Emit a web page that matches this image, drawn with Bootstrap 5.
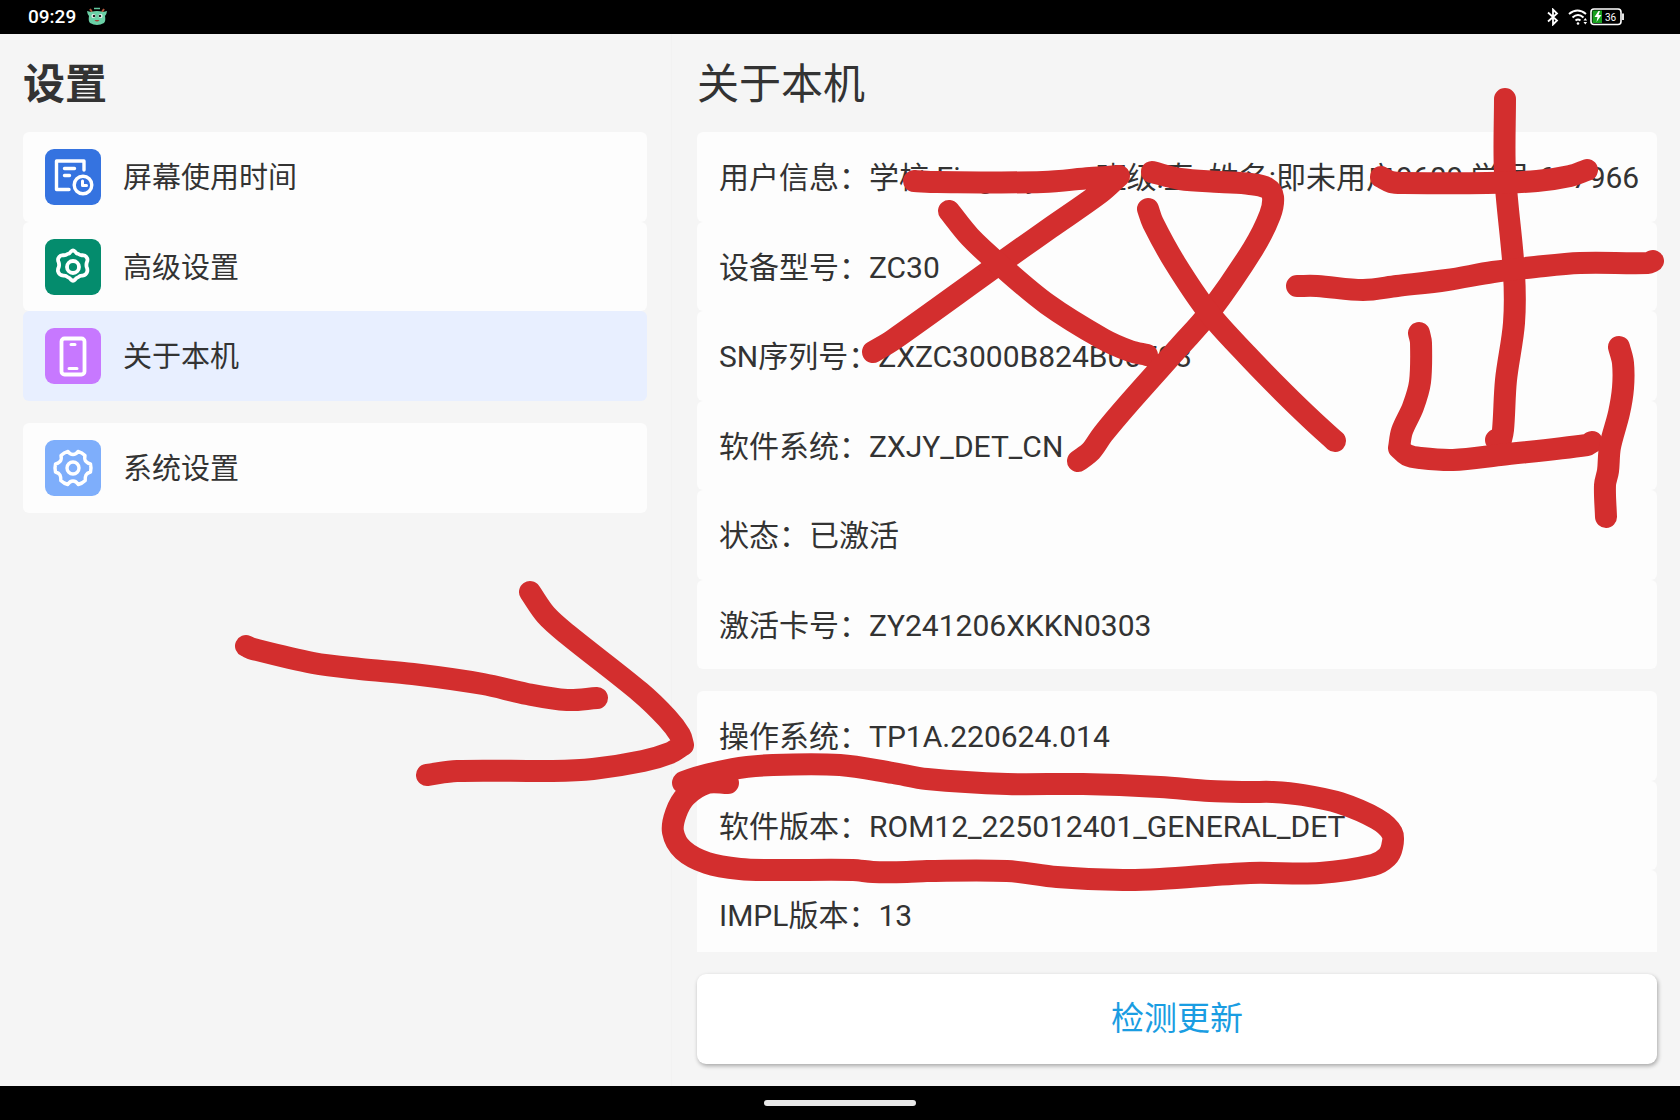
<!DOCTYPE html>
<html lang="zh-CN">
<head>
<meta charset="utf-8">
<meta name="viewport" content="width=device-width, initial-scale=1">
<title>关于本机</title>
<link href="https://cdn.jsdelivr.net/npm/bootstrap@5.3.0/dist/css/bootstrap.min.css" rel="stylesheet">
<style>
  body { font-family: Roboto, "Noto Sans CJK SC", sans-serif; color: #333; background: #f5f5f5; }
  .screen { height: 100vh; }
  .status-bar { height: 34px; background: #000; color: #fff; padding: 0 56px 0 28px; gap: 10px; font-size: 19px; font-weight: 500; }
  .nav-bar-bottom { height: 34px; background: #000; }
  .home-handle { width: 152px; height: 6px; border-radius: 3px; background: #e8e8e8; border: 0; padding: 0; }
  .side-pane { width: 40%; padding: 0 24px 0 23px; border-right: 1px solid #f2f2f2; }
  .detail-pane { min-width: 0; padding: 0 23px 22px 25px; }
  .pane-title { height: 98px; font-size: 42px; line-height: 62px; margin: 0; padding-top: 4px; flex-shrink: 0; }
  .side-pane .pane-title { font-weight: 700; }
  .detail-pane .pane-title { font-weight: 400; }
  .rows { --bs-list-group-border-width: 0; --bs-list-group-bg: #fdfdfd; --bs-list-group-color: #333; --bs-list-group-action-color: #333;
    --bs-list-group-active-bg: #e8efff; --bs-list-group-active-color: #333; --bs-list-group-item-padding-x: 22px; --bs-list-group-item-padding-y: 0; margin: 0 0 22px; }
  .rows .list-group-item { height: 90px; font-size: 29px; line-height: 44px; border-radius: 6px; display: flex; align-items: center; gap: 22px; white-space: nowrap; }
  .rows .list-group-item:nth-child(even) { height: 89px; }
  .rows .list-group-item span { padding-top: 2px; }
  .scroller .rows .list-group-item { font-size: 30px; }
  .scroller { min-height: 0; overflow: hidden; margin-bottom: 22px; }
  .tile { width: 56px; height: 56px; flex: none; }
  .update-btn { height: 90px; flex-shrink: 0; border-radius: 9px; background: #fff; color: #1a9de2; font-size: 33px; line-height: 48px; border: 0; box-shadow: 1px 2px 4px rgba(0,0,0,.32); }
  .update-btn:hover { background: #fff; color: #1a9de2; }
  .ink { position: absolute; left: 0; top: 0; width: 100%; height: 100%; pointer-events: none; fill: none; stroke: #d32e2e; stroke-width: 22; stroke-linecap: round; stroke-linejoin: round; }
</style>
<script src="https://cdn.jsdelivr.net/npm/bootstrap@5.3.0/dist/js/bootstrap.bundle.min.js"></script>
</head>
<body>
<div class="screen d-flex flex-column position-relative overflow-hidden">
  <header class="status-bar d-flex align-items-center flex-shrink-0">
    <span>09:29</span>
    <svg width="22" height="20" viewBox="0 0 22 20" aria-hidden="true">
      <path d="M4 2l2 3M18 2l-2 3" stroke="#b5573c" stroke-width="2"/>
      <path d="M8 1.500h6" stroke="#62c79d" stroke-width="1.500"/>
      <path d="M1 4l4 1q6-2 12 0l4-1q-.5 4-2 5 1 5-1 7-7 4-14 0-2-2-1-7-1.500-1-2-5z" fill="#6bd0a6"/>
      <circle cx="7.500" cy="9" r="2" fill="#fff"/><circle cx="14.500" cy="9" r="2" fill="#fff"/>
      <circle cx="8" cy="9" r="1.300" fill="#222"/><circle cx="14" cy="9" r="1.300" fill="#222"/>
      <path d="M8.500 13q2.500 3 5 0z" fill="#a8433a"/>
    </svg>
    <div class="ms-auto d-flex align-items-center">
      <svg class="me-2" width="14" height="18" viewBox="0 0 14 18" fill="none" stroke="#fff" stroke-width="1.800" aria-label="蓝牙"><path d="M2 4.500l9 8-4 4v-15l4 4-9 8"/></svg>
      <svg width="22" height="18" viewBox="0 0 20 18" fill="none" stroke="#fff" stroke-width="2" aria-label="WLAN"><path d="M0 6q8.500-7 17 0M3.500 9.500q5.500-5 11 0M6.500 12.500q2.500-2 5 0"/><circle cx="9" cy="15.500" r="1.300" fill="#fff" stroke="none"/><path d="M14.500 12.500l1.800-2.500 1.800 2.500zM14.500 14l1.800 2.500 1.800-2.500z" fill="#fff" stroke="none"/></svg>
      <svg width="34" height="18" viewBox="0 0 34 18" aria-label="电量"><rect x="1" y="1" width="30" height="15.500" rx="3" fill="none" stroke="#fff" stroke-width="1.600"/><rect x="2.500" y="2.500" width="9.500" height="12.500" fill="#18a11f"/><path d="M8.500 3l-4 6h3l-1 5 5-7h-3l1.500-4z" fill="#fff"/><path d="M33 5.500v6.500" stroke="#fff" stroke-width="1.800"/><text x="15" y="12.500" font-size="10" font-weight="400" fill="#fff">36</text></svg>
    </div>
  </header>

  <main class="d-flex flex-grow-1" style="min-height:0">
    <nav class="side-pane flex-shrink-0 d-flex flex-column">
      <h1 class="pane-title d-flex align-items-center">设置</h1>
      <div class="list-group rows">
        <a href="#" class="list-group-item list-group-item-action">
          <svg class="tile" viewBox="0 0 56 56" fill="none" stroke="#fff" stroke-width="3.400" stroke-linecap="round" stroke-linejoin="round"><rect width="56" height="56" rx="9" fill="#3573e0" stroke="none"/><path d="M39 21v-9H11.500v28.500H24"/><path d="M19.500 19.500h10M19.500 26.500h5" stroke-width="3.400"/><circle cx="38" cy="36" r="8.800"/><path d="M37.500 32v4.500h4" stroke-width="3"/></svg>
          <span>屏幕使用时间</span></a>
        <a href="#" class="list-group-item list-group-item-action">
          <svg class="tile" viewBox="0 0 56 56" fill="none" stroke="#fff" stroke-width="3.800" stroke-linejoin="round"><rect width="56" height="56" rx="9" fill="#048c6d" stroke="none"/><path d="M22.500 15q2.500-.5 3.500-2.500 2-2 4 0 1 2 3.500 2.500 1.500 1.500 4 1.200 3.500.2 4.800 3.200.5 2-.5 4-.8 2.500 0 5 .8 1.500.5 4-1 4-4.800 4.300-2.500-.2-4 1.300-2.500.7-3.500 2.700-2 2-4 0-1-2-3.500-2.700-1.500-1.500-4-1.300Q14 36.400 13 32.400q-.3-2.500.7-4 .8-2.500 0-5-1-2-.5-4 1.300-3 4.800-3.200 2.500.3 4.500-1.200z"/><circle cx="28" cy="28" r="6"/></svg>
          <span>高级设置</span></a>
        <a href="#" class="list-group-item list-group-item-action active" aria-current="page">
          <svg class="tile" viewBox="0 0 56 56" fill="none" stroke="#fff" stroke-width="3.800" stroke-linecap="round"><rect width="56" height="56" rx="9" fill="#c778ff" stroke="none"/><rect x="16.500" y="10.500" width="23" height="36" rx="3"/><path d="M26 16.500h4M24 40.500h8" stroke-width="3"/></svg>
          <span>关于本机</span></a>
      </div>
      <div class="list-group rows">
        <a href="#" class="list-group-item list-group-item-action">
          <svg class="tile" viewBox="0 0 56 56" fill="none" stroke="#fff" stroke-width="3.400" stroke-linejoin="round"><rect width="56" height="56" rx="9" fill="#7eaefb" stroke="none"/><path d="M23 11.500q2 3 5 3t5-3q4 1 7 4-1 4 1 6t4.500 2.500q1 4 0 8Q42 33 41 35t-.8 5.500q-3 3-7 4-2-3.500-5.200-3.500t-5.200 3.500q-4-1-7-4Q16 37 15 35t-4.500-3q-1-4 0-8 2.500-.5 4.500-2.500t1-6q3-3 7-4z"/><circle cx="28" cy="28" r="6"/></svg>
          <span>系统设置</span></a>
      </div>
    </nav>

    <section class="detail-pane flex-grow-1 d-flex flex-column">
      <h2 class="pane-title d-flex align-items-center">关于本机</h2>
      <div class="scroller flex-grow-1">
        <div class="list-group rows">
          <div class="list-group-item"><span>用户信息：学校:Eingxuyuan 班级:直&nbsp; 姓名:即未用户9609 学号:617966</span></div>
          <div class="list-group-item"><span>设备型号：ZC30</span></div>
          <div class="list-group-item"><span>SN序列号：ZXZC3000B824B00593</span></div>
          <div class="list-group-item"><span>软件系统：ZXJY_DET_CN</span></div>
          <div class="list-group-item"><span>状态：已激活</span></div>
          <div class="list-group-item"><span>激活卡号：ZY241206XKKN0303</span></div>
        </div>
        <div class="list-group rows">
          <div class="list-group-item"><span>操作系统：TP1A.220624.014</span></div>
          <div class="list-group-item"><span>软件版本：ROM12_225012401_GENERAL_DET</span></div>
          <div class="list-group-item"><span>IMPL版本：13</span></div>
        </div>
      </div>
      <button type="button" class="btn update-btn w-100">检测更新</button>
    </section>
  </main>

  <footer class="nav-bar-bottom d-flex align-items-center justify-content-center flex-shrink-0">
    <button type="button" class="home-handle" aria-label="主屏幕"></button>
  </footer>

  <svg class="ink" viewBox="0 0 1680 1120" preserveAspectRatio="xMinYMin meet" aria-hidden="true"></svg>
</div>
<script>
  // Freehand marker strokes: points joined by a smooth curve, "|" marks a sharp turn
  const strokes = [
    "914,181 937,182 1043,182 1090,178 1119,176|1119,176 1100,193 1050,228 999,264 893,340 873,352",
    "949,211 970,237 999,264 1047,304 1103,339 1130,351 1147,355",
    "1152,172 1180,179 1220,182 1250,184 1267,188 1273,197 1270,215 1253,249 1209,313 1180,346 1130,402 1103,434 1091,451 1078,461",
    "1148,209 1153,223 1175,263 1209,313 1247,355 1285,394 1313,421 1335,441",
    "1505,99 1505,173 1514,273 1514,323 1506,380 1503,430 1500,444|1500,444 1496,440",
    "1381,177 1391,182 1404,183 1487,183 1537,181 1570,176 1587,170",
    "1297,286 1317,286 1363,290 1397,286 1447,280 1493,272 1535,267 1580,263 1648,263 1653,261",
    "1419,333 1421,343 1420,382 1413,407 1402,431 1399,448|1399,448 1407,455 1420,458 1453,460 1500,455 1587,445 1592,442",
    "1619,347 1623,363 1623,388 1619,413 1610,447 1608,471 1605,485 1606,517",
    "246,646 253,649 313,663 360,669 413,674 483,684 527,694 567,700 597,698",
    "530,592 546,615 567,634 640,692 667,718 680,735 683,745|683,745 670,753 643,761 593,769 553,771 457,771 427,775",
    "728,783 707,783 686,796 676,813 673,832 683,850 707,863 740,869 773,870 853,870 873,872 907,872 927,871 1007,871 1057,877 1123,880 1160,879 1250,873 1320,873 1373,865 1387,857 1392,847 1392,833 1377,819 1340,803 1303,795 1273,792 1250,792 1210,791 1160,787 1083,784 1007,784 927,779 893,773 840,765 773,765 733,769 684,782 700,783"
  ];
  const curve = text => {
    const p = text.trim().split(" ").map(s => s.split(",").map(Number));
    let d = "M" + p[0];
    for (let i = 0; i < p.length - 1; i++) {
      const a = p[i - 1] || p[i], b = p[i], c = p[i + 1], e = p[i + 2] || c;
      const len = Math.hypot(c[0] - b[0], c[1] - b[1]);
      const k1 = len / (Math.hypot(c[0] - a[0], c[1] - a[1]) || 1) / 3;
      const k2 = len / (Math.hypot(e[0] - b[0], e[1] - b[1]) || 1) / 3;
      d += `C${b[0] + (c[0] - a[0]) * k1},${b[1] + (c[1] - a[1]) * k1} ${c[0] - (e[0] - b[0]) * k2},${c[1] - (e[1] - b[1]) * k2} ${c}`;
    }
    return d;
  };
  const ink = document.querySelector(".ink");
  for (const s of strokes) {
    const path = document.createElementNS("http://www.w3.org/2000/svg", "path");
    path.setAttribute("d", s.split("|").map(curve).join(""));
    ink.append(path);
  }
</script>
</body>
</html>
